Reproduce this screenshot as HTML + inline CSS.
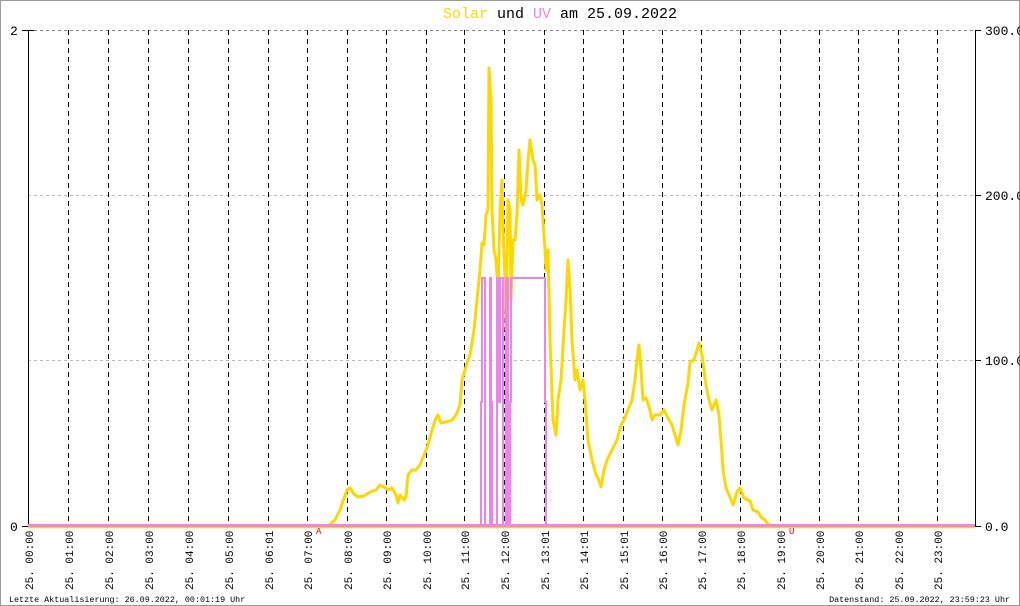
<!DOCTYPE html>
<html><head><meta charset="utf-8"><style>
html,body{margin:0;padding:0;background:#fff}
svg{display:block}
text{font-family:"Liberation Mono","DejaVu Sans Mono",monospace}
</style></head><body>
<svg width="1020" height="606" viewBox="0 0 1020 606" xmlns="http://www.w3.org/2000/svg">
<rect x="0.5" y="0.5" width="1019" height="605" fill="#fff" stroke="#999"/>
<text x="560" y="18" font-size="15" text-anchor="middle"><tspan fill="#ffd700">Solar</tspan><tspan fill="#000"> und </tspan><tspan fill="#ee82ee">UV</tspan><tspan fill="#000"> am 25.09.2022</tspan></text>
<g stroke="#bbb" stroke-dasharray="3,3" stroke-width="1">
<line x1="28" y1="30.5" x2="975" y2="30.5" stroke="#888"/>
<line x1="28" y1="195.5" x2="975" y2="195.5"/>
<line x1="28" y1="360.5" x2="975" y2="360.5"/>
</g>
<g stroke="#000" stroke-dasharray="5,4" stroke-width="1">
<line x1="68.5" y1="30" x2="68.5" y2="526"/><line x1="108.5" y1="30" x2="108.5" y2="526"/>
<line x1="148.5" y1="30" x2="148.5" y2="526"/><line x1="188.5" y1="30" x2="188.5" y2="526"/>
<line x1="228.5" y1="30" x2="228.5" y2="526"/><line x1="268.5" y1="30" x2="268.5" y2="526"/>
<line x1="307.5" y1="30" x2="307.5" y2="526"/><line x1="347.5" y1="30" x2="347.5" y2="526"/>
<line x1="386.5" y1="30" x2="386.5" y2="526"/><line x1="426.5" y1="30" x2="426.5" y2="526"/>
<line x1="464.5" y1="30" x2="464.5" y2="526"/><line x1="504.5" y1="30" x2="504.5" y2="526"/>
<line x1="544.5" y1="30" x2="544.5" y2="526"/><line x1="583.5" y1="30" x2="583.5" y2="526"/>
<line x1="623.5" y1="30" x2="623.5" y2="526"/><line x1="662.5" y1="30" x2="662.5" y2="526"/>
<line x1="701.5" y1="30" x2="701.5" y2="526"/><line x1="740.5" y1="30" x2="740.5" y2="526"/>
<line x1="780.5" y1="30" x2="780.5" y2="526"/><line x1="819.5" y1="30" x2="819.5" y2="526"/>
<line x1="858.5" y1="30" x2="858.5" y2="526"/><line x1="898.5" y1="30" x2="898.5" y2="526"/>
<line x1="937.5" y1="30" x2="937.5" y2="526"/>
</g>
<g stroke="#000" stroke-width="1">
<line x1="28.5" y1="30" x2="28.5" y2="527"/><line x1="22" y1="30.5" x2="34" y2="30.5"/><line x1="22" y1="526.5" x2="28" y2="526.5"/>
<line x1="975.5" y1="30" x2="975.5" y2="527"/><line x1="975" y1="30.5" x2="981" y2="30.5"/><line x1="975" y1="195.5" x2="981" y2="195.5"/><line x1="975" y1="360.5" x2="981" y2="360.5"/><line x1="975" y1="526.5" x2="981" y2="526.5"/>
</g>
<line x1="28" y1="527.5" x2="975" y2="527.5" stroke="#ffd700" stroke-width="1.5"/>
<polyline fill="none" stroke="#ffd700" stroke-width="3" stroke-linejoin="round" points="328,526 335,520 340,510 344,498 347,490 350,488 354,494 358,497 364,496 370,492 376,490 380,485 384,487 388,490 392,488 396,495 398,503 400,495 404,500 406,497 408,475 412,470 416,470 420,465 424,455 428,445 432,430 436,418 438,415 441,423 446,422 452,420 456,415 460,405 462,380 465,370 468,360 470,355 474,330 476,310 478,290 480,270 482,243 484,245 486,215 488,210 489,68 491,100 492,210 494,250 496,260 498,290 500,210 502,180 503,225 505,280 506,330 508,200 510,210 511,300 513,240 515,240 517,215 519,150 521,200 523,205 526,190 528,160 530,140 533,160 535,165 537,200 540,195 542,205 545,250 546,270 548,250 550,340 553,420 556,435 558,400 561,380 564,330 566,300 568,260 570,290 572,340 575,380 577,370 580,390 583,380 585,400 588,440 592,460 596,475 598,478 601,487 604,470 607,460 612,450 617,440 621,425 624,420 628,410 632,400 635,380 637,360 639,345 641,370 643,400 646,398 650,410 652,420 655,415 660,415 664,410 668,418 672,425 675,435 678,445 681,430 684,405 688,383 690,362 694,360 697,350 699,343 702,355 706,385 709,400 712,410 716,400 719,415 721,440 723,470 726,488 730,497 733,505 737,492 740,488 744,498 750,501 753,510 758,512 761,517 765,520 768,524 771,526"/>
<path fill="none" stroke="#ee82ee" stroke-width="2" d="M481 526V402H482V278H485V526H490V278H491V402H492V526H497V278H499V402H500V278H503V526H506V278H508V526H510V402H511V278H516V278H545V402H546V526"/>
<line x1="28" y1="525.5" x2="975" y2="525.5" stroke="#ee82ee" stroke-width="3"/>
<text x="316" y="534" font-size="9" fill="#e00">A</text>
<text x="789" y="534" font-size="9" fill="#e00">U</text>
<g font-size="13" fill="#000">
<text x="10" y="35">2</text><text x="10" y="531">0</text>
<text x="985" y="35">300.0</text><text x="985" y="200">200.0</text><text x="985" y="365">100.0</text><text x="985" y="531">0.0</text>
</g>
<g font-size="11" fill="#000">
<text transform="translate(33,590) rotate(-90)" xml:space="preserve">25. 00:00</text>
<text transform="translate(73,590) rotate(-90)" xml:space="preserve">25. 01:00</text>
<text transform="translate(113,590) rotate(-90)" xml:space="preserve">25. 02:00</text>
<text transform="translate(153,590) rotate(-90)" xml:space="preserve">25. 03:00</text>
<text transform="translate(193,590) rotate(-90)" xml:space="preserve">25. 04:00</text>
<text transform="translate(233,590) rotate(-90)" xml:space="preserve">25. 05:00</text>
<text transform="translate(273,590) rotate(-90)" xml:space="preserve">25. 06:01</text>
<text transform="translate(312,590) rotate(-90)" xml:space="preserve">25. 07:00</text>
<text transform="translate(352,590) rotate(-90)" xml:space="preserve">25. 08:00</text>
<text transform="translate(391,590) rotate(-90)" xml:space="preserve">25. 09:00</text>
<text transform="translate(431,590) rotate(-90)" xml:space="preserve">25. 10:00</text>
<text transform="translate(469,590) rotate(-90)" xml:space="preserve">25. 11:00</text>
<text transform="translate(509,590) rotate(-90)" xml:space="preserve">25. 12:00</text>
<text transform="translate(549,590) rotate(-90)" xml:space="preserve">25. 13:01</text>
<text transform="translate(588,590) rotate(-90)" xml:space="preserve">25. 14:01</text>
<text transform="translate(628,590) rotate(-90)" xml:space="preserve">25. 15:01</text>
<text transform="translate(667,590) rotate(-90)" xml:space="preserve">25. 16:00</text>
<text transform="translate(706,590) rotate(-90)" xml:space="preserve">25. 17:00</text>
<text transform="translate(745,590) rotate(-90)" xml:space="preserve">25. 18:00</text>
<text transform="translate(785,590) rotate(-90)" xml:space="preserve">25. 19:00</text>
<text transform="translate(824,590) rotate(-90)" xml:space="preserve">25. 20:00</text>
<text transform="translate(863,590) rotate(-90)" xml:space="preserve">25. 21:00</text>
<text transform="translate(903,590) rotate(-90)" xml:space="preserve">25. 22:00</text>
<text transform="translate(942,590) rotate(-90)" xml:space="preserve">25. 23:00</text>
</g>
<g font-size="8.4" fill="#000">
<text x="9" y="602">Letzte Aktualisierung: 26.09.2022, 00:01:19 Uhr</text>
<text x="1010" y="602" text-anchor="end">Datenstand: 25.09.2022, 23:59:23 Uhr</text>
</g>
</svg>
</body></html>
